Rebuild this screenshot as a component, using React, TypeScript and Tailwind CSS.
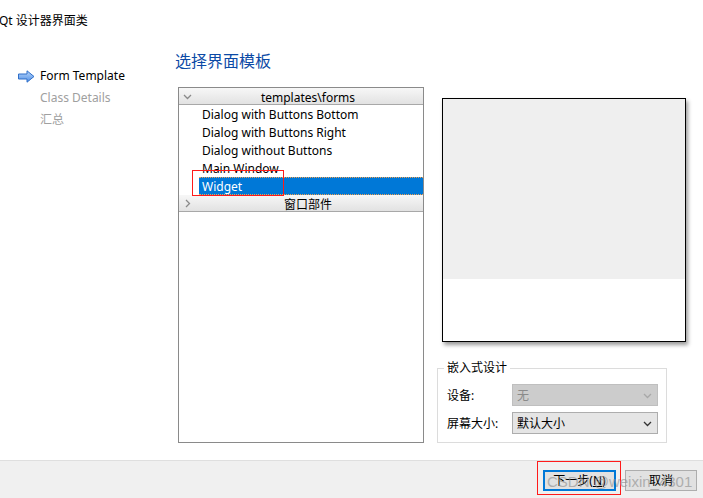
import React from 'react';

const FONT = { fontFamily: "'Noto Sans','Noto Sans CJK SC',sans-serif" };

const templates = [
    'Dialog with Buttons Bottom',
    'Dialog with Buttons Right',
    'Dialog without Buttons',
    'Main Window',
    'Widget',
];

const NavArrow: React.FC = () => (
    <svg width="17" height="13" viewBox="0 0 17 13">
        <defs>
            <linearGradient id="arr" x1="0" y1="0" x2="0" y2="1">
                <stop offset="0" stopColor="#b9d6fa" />
                <stop offset="1" stopColor="#4f8fe6" />
            </linearGradient>
        </defs>
        <path d="M0.5 4 H9 V0.8 L16 6.5 L9 12.2 V9 H0.5 Z" fill="url(#arr)" stroke="#2f6fc9" strokeWidth="1" strokeLinejoin="round" />
    </svg>
);

const Chevron: React.FC<{ dir: 'down' | 'right'; color?: string }> = ({ dir, color = '#8a8a8a' }) => (
    <svg width="9" height="9" viewBox="0 0 9 9">
        {dir === 'down'
            ? <polyline points="1,3 4.5,6.5 8,3" fill="none" stroke={color} strokeWidth="1.3" />
            : <polyline points="3,1 6.5,4.5 3,8" fill="none" stroke={color} strokeWidth="1.3" />}
    </svg>
);

const TreeHeader: React.FC<{ label: string; open: boolean }> = ({ label, open }) => (
    <div className="flex h-[17px] items-center bg-linear-to-b from-[#f7f7f7] to-[#e2e2e2] border-b border-[#a8a8a8]">
        <div className="w-[14px] flex justify-center pl-[2px]">
            <Chevron dir={open ? 'down' : 'right'} />
        </div>
        <div className="flex-1 text-center text-[12px] leading-[16px] pt-[3px] text-black">{label}</div>
    </div>
);

const Combo: React.FC<{ value: string; disabled?: boolean }> = ({ value, disabled }) => (
    <div
        className={`flex items-center w-[146px] h-[22px] border pl-[4px] pr-[5px] text-[12px] ${
            disabled ? 'bg-[#cccccc] border-[#bfbfbf] text-[#8a8a8a]' : 'bg-[#e5e5e5] border-[#adadad] text-black'
        }`}
    >
        <span className="flex-1 pt-[1px]">{value}</span>
        <Chevron dir="down" color={disabled ? '#a8a8a8' : '#333333'} />
    </div>
);

export default function App() {
    return (
        <div className="relative w-[703px] h-[498px] bg-white flex flex-col overflow-hidden text-black" style={FONT}>
            <div className="h-[460px] flex flex-col">
                <div className="pt-[13px] text-[12px] leading-[16px] -ml-[1px]">Qt 设计器界面类</div>

                <div className="flex mt-[21px]">
                    {/* wizard steps */}
                    <div className="w-[175px] pt-[15px] flex flex-col text-[12px]">
                        <div className="flex items-center h-[22px] pl-[18px]">
                            <NavArrow />
                            <span className="ml-[5px]">Form Template</span>
                        </div>
                        <div className="flex items-center h-[22px] pl-[40px] text-[#a0a0a0]">Class Details</div>
                        <div className="flex items-center h-[22px] pl-[40px] text-[#a0a0a0]">汇总</div>
                    </div>

                    <div className="flex flex-col">
                        <div className="h-[22px] leading-[22px] text-[16px] text-[#0c4aa6]">选择界面模板</div>

                        <div className="flex mt-[15px] ml-[3px]">
                            {/* template tree */}
                            <div className="w-[246px] h-[356px] border border-[#8a8a8a] bg-white flex flex-col">
                                <TreeHeader label="templates\forms" open />
                                {templates.map((t, i) => {
                                    const selected = i === templates.length - 1;
                                    return (
                                        <div key={t} className="h-[18px] pl-[20px]">
                                            <div
                                                className={`h-full flex items-center pl-[3px] pt-[2px] text-[12px] ${
                                                    selected
                                                        ? 'bg-[#0078d7] text-white border-y border-dotted border-[#f0a050]'
                                                        : ''
                                                }`}
                                            >
                                                {t}
                                            </div>
                                        </div>
                                    );
                                })}
                                <TreeHeader label="窗口部件" open={false} />
                            </div>

                            {/* preview + embedded design */}
                            <div className="ml-[18px] pt-[11px] flex flex-col">
                                <div className="w-[244px] h-[244px] border border-black bg-white shadow-[2px_3px_4px_rgba(0,0,0,0.4)] flex flex-col">
                                    <div className="h-[180px] bg-[#efefef]" />
                                </div>

                                <fieldset className="mt-[18px] -ml-[5px] w-[230px] border border-[#dcdcdc] pl-[9px] pr-[8px] pb-[8px]">
                                    <legend className="px-[3px] -ml-[3px] text-[12px] leading-[16px]">嵌入式设计</legend>
                                    <div className="pt-[8px] flex flex-col gap-[6px] text-[12px]">
                                        <div className="flex items-center">
                                            <span className="w-[65px] pt-[1px]">设备:</span>
                                            <Combo value="无" disabled />
                                        </div>
                                        <div className="flex items-center">
                                            <span className="w-[65px] pt-[1px]">屏幕大小:</span>
                                            <Combo value="默认大小" />
                                        </div>
                                    </div>
                                </fieldset>
                            </div>
                        </div>
                    </div>
                </div>
            </div>

            {/* button bar */}
            <div className="h-[38px] bg-[#f0f0f0] border-t border-[#dfdfdf] flex justify-end items-start pt-[9px] pr-[6px] gap-[9px] text-[12px]">
                <button className="w-[73px] h-[21px] bg-[#e1e1e1] border-2 border-[#0078d7] flex items-center justify-center">
                    下一步(<span className="underline">N</span>)
                </button>
                <button className="w-[72px] h-[21px] bg-[#e1e1e1] border border-[#adadad] flex items-center justify-center">
                    取消
                </button>
            </div>

            {/* annotation overlays */}
            <div className="absolute left-[192px] top-[170px] w-[92px] h-[26px] border border-[#ff1a1a]" />
            <div className="absolute left-[537px] top-[461px] w-[84px] h-[34px] border border-[#ff1a1a]" />
            <div
                className="absolute left-[547px] top-[472px] text-[15px] leading-[20px] text-[#8c8c8c] opacity-60 whitespace-nowrap pointer-events-none"
                style={{ fontFamily: "'Liberation Sans',sans-serif" }}
            >
                CSDN @weixin_4301
            </div>
        </div>
    );
}
